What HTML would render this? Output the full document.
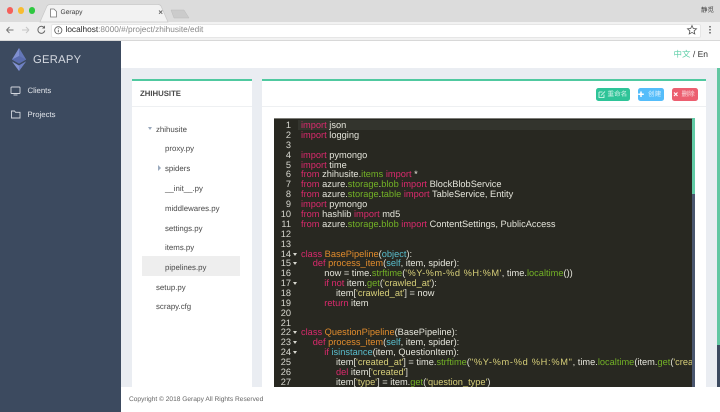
<!DOCTYPE html>
<html lang="zh"><head><meta charset="utf-8"><title>Gerapy</title>
<style>
html,body{margin:0;padding:0;width:720px;height:412px;overflow:hidden;background:#fff;font-family:"Liberation Sans","Noto Sans CJK SC",sans-serif}
*{box-sizing:border-box}
.a{position:absolute}
#root{position:relative;width:720px;height:412px;overflow:hidden;filter:blur(.3px);text-rendering:geometricPrecision}
.t{position:absolute;white-space:pre;line-height:12px}
.f{position:absolute;white-space:pre;font-size:7.85px;color:#4a4a4a;line-height:12px;margin-top:.5px}
.l{position:absolute;left:301px;white-space:pre;font-size:9.25px;line-height:12px;height:12px;color:#e4e4da}
.n{position:absolute;left:274px;width:17px;text-align:right;white-space:pre;font-size:9.25px;line-height:12px;color:#d8d8d0}
.k{color:#d92a6c}.g{color:#72b026}.o{color:#e08b2c}.s{color:#d5cd78}.c{color:#58bccb}.d{color:#d5cd78;letter-spacing:.5px}
.ar{position:absolute;left:293px;width:0;height:0;border-left:2.5px solid transparent;border-right:2.5px solid transparent;border-top:3px solid #d8d8d0}
.btn{position:absolute;top:88px;height:12.5px;border-radius:2.5px}
.bt{position:absolute;top:88.8px;line-height:12.5px;font-size:6.6px;color:rgba(255,255,255,.78);white-space:pre}
.bar{position:absolute;top:79px;height:2px;background:#50c9a0}
</style></head><body><div id="root">
<!-- browser chrome -->
<div class="a" style="left:0;top:0;width:720px;height:22px;background:#dcdcdc"></div>
<div class="a" style="left:0;top:22px;width:720px;height:19px;background:#f2f2f2;border-bottom:1px solid #d8d8d8"></div>
<div class="a" style="left:6.5px;top:7px;width:6.5px;height:6.5px;border-radius:50%;background:#f5605a"></div>
<div class="a" style="left:17.5px;top:7px;width:6.5px;height:6.5px;border-radius:50%;background:#f8bc30"></div>
<div class="a" style="left:28.5px;top:7px;width:6.5px;height:6.5px;border-radius:50%;background:#2ec840"></div>
<svg class="a" style="left:0;top:0" width="200" height="24"><path d="M40 22 L47 6 Q48 4.5 50 4.5 L158 4.5 Q160 4.5 161 6 L168 22Z" fill="#f2f2f2" stroke="#c8c8c8" stroke-width=".7"/><path d="M171 10 L184 10 L189 18 L174 18Z" fill="#cbcbcb" stroke="#bbb" stroke-width=".5"/><path d="M50.5 9 h3.500 l2.500 2.500 v5.500 h-6z" fill="#fff" stroke="#777" stroke-width=".8"/><path d="M159 10.500 l3.300 3.300 M162.300 10.500 l-3.300 3.300" stroke="#666" stroke-width=".9"/></svg>
<div class="t" style="left:60.5px;top:6.500px;font-size:6.7px;color:#3c3c3c">Gerapy</div>
<div class="t" style="left:701px;top:4.500px;font-size:6.500px;color:#444">静觅</div>
<div class="a" style="left:51px;top:23.5px;width:649.5px;height:14px;background:#fff;border:.5px solid #e6e6e6;border-radius:2px"></div>
<svg class="a" style="left:0;top:22px" width="64" height="18"><path d="M6.500 8 h7 M6.500 8 l3-3 M6.500 8 l3 3" stroke="#777" stroke-width="1" fill="none"/><path d="M22 8 h7 M29 8 l-3-3 M29 8 l-3 3" stroke="#c6c6c6" stroke-width="1" fill="none"/><path d="M44 5.500 a3.500 3.500 0 1 0 .8 3" stroke="#666" stroke-width="1" fill="none"/><path d="M45 3.500 v3 h-3z" fill="#666"/><circle cx="58.300" cy="8.300" r="3.600" fill="none" stroke="#555" stroke-width=".8"/><path d="M58.300 7.800 v2.500 M58.300 6.200 v.8" stroke="#555" stroke-width=".8"/></svg>
<div class="t" style="left:65.5px;top:24.300px;font-size:8.28px;color:#8a8a8a"><span style="color:#2c2c2c">localhost</span>:8000/#/project/zhihusite/edit</div>
<svg class="a" style="left:685px;top:23.300px" width="30" height="14"><path d="M7 2.500 l1.300 3 3.200 .3 -2.400 2.100 .7 3.100 -2.800-1.600 -2.800 1.600 .7-3.100 -2.400-2.100 3.200-.3z" fill="none" stroke="#555" stroke-width=".8"/><circle cx="25" cy="3.800" r=".9" fill="#666"/><circle cx="25" cy="6.800" r=".9" fill="#666"/><circle cx="25" cy="9.800" r=".9" fill="#666"/></svg>
<!-- sidebar -->
<div class="a" style="left:0;top:41px;width:121px;height:371px;background:#3c4a5f"></div>
<svg class="a" style="left:11px;top:47px" width="16" height="25"><path d="M8 1 L1 12.500 L8 16.500 L15 12.500Z" fill="#7f8fd0"/><path d="M8 1 L8 16.500 L15 12.500Z" fill="#6477b8"/><path d="M1 12.500 L8 9 L15 12.500 L8 16.500Z" fill="#5a6cae"/><path d="M1 14.500 L8 18.500 L15 14.500 L8 24Z" fill="#8393d4"/><path d="M8 18.500 L15 14.500 L8 24Z" fill="#6e80c2"/></svg>
<div class="t" style="left:33px;top:54px;font-size:11.2px;color:#d5d9e0;letter-spacing:.3px">GERAPY</div>
<svg class="a" style="left:9px;top:84px" width="14" height="40"><rect x="2" y="3" width="9" height="6.500" rx=".8" fill="none" stroke="#d3d7de" stroke-width=".9"/><path d="M4.500 11 h4" stroke="#d3d7de" stroke-width=".9"/><path d="M2.500 27 h3 l1 1.300 h4.500 v5.700 h-8.500z" fill="none" stroke="#d3d7de" stroke-width=".9"/></svg>
<div class="t" style="left:27.5px;top:84.5px;font-size:7.75px;color:#e2e5ea">Clients</div>
<div class="t" style="left:27.5px;top:109.300px;font-size:7.75px;color:#e2e5ea">Projects</div>
<!-- main -->
<div class="a" style="left:121px;top:41px;width:599px;height:27px;background:#fff"></div>
<div class="t" style="left:673.5px;top:48px;font-size:8.5px;color:#333"><span style="color:#5fcfa8">中文</span> / En</div>
<div class="a" style="left:121px;top:68px;width:599px;height:319px;background:#eaedf2"></div>
<div class="a" style="left:717px;top:68px;width:3px;height:277px;background:#62c6a2"></div>
<div class="a" style="left:717px;top:345px;width:3px;height:42px;background:#3c4a5f"></div>
<!-- left panel -->
<div class="a" style="left:132px;top:79px;width:120px;height:308px;background:#fff"></div>
<div class="bar" style="left:132px;width:120px"></div>
<div class="a" style="left:132px;top:106px;width:120px;height:1px;background:#eef0f2"></div>
<div class="t" style="left:140px;top:88px;font-size:7.77px;font-weight:bold;color:#4a4a4a">ZHIHUSITE</div>
<div class="a" style="left:142px;top:256px;width:98px;height:20px;background:#eeeeee"></div>
<div class="a" style="left:147.5px;top:127px;width:0;height:0;border-left:2.5px solid transparent;border-right:2.5px solid transparent;border-top:3.5px solid #9aa9bd"></div>
<div class="a" style="left:157.5px;top:165px;width:0;height:0;border-top:3px solid transparent;border-bottom:3px solid transparent;border-left:3.5px solid #9aa9bd"></div>
<div class="f" style="left:156px;top:123px">zhihusite</div>
<div class="f" style="left:165px;top:142.5px">proxy.py</div>
<div class="f" style="left:165px;top:162px">spiders</div>
<div class="f" style="left:165px;top:182px">__init__.py</div>
<div class="f" style="left:165px;top:202px">middlewares.py</div>
<div class="f" style="left:165px;top:222px">settings.py</div>
<div class="f" style="left:165px;top:241.5px">items.py</div>
<div class="f" style="left:165px;top:261px">pipelines.py</div>
<div class="f" style="left:156px;top:281px">setup.py</div>
<div class="f" style="left:156px;top:300.5px">scrapy.cfg</div>
<!-- right panel -->
<div class="a" style="left:262px;top:79px;width:444px;height:308px;background:#fff"></div>
<div class="bar" style="left:262px;width:444px"></div>
<div class="a" style="left:262px;top:106px;width:444px;height:1px;background:#eef0f2"></div>
<div class="btn" style="left:596px;width:34px;background:#2fc498"></div>
<div class="btn" style="left:637.5px;width:26.5px;background:#55bdfa"></div>
<div class="btn" style="left:671.5px;width:26px;background:#ec5f70"></div>
<svg class="a" style="left:596px;top:88px" width="102" height="13"><path d="M3 4 h3.500 M3 4 v5.500 h5 v-3 M5 7.500 l4-4" stroke="#e8fbf4" stroke-width=".8" fill="none"/><path d="M45 3.500 v5.500 M42.200 6.300 h5.600" stroke="#fff" stroke-width="1.500"/><path d="M78 4.500 l3.500 3.500 M81.500 4.500 l-3.500 3.500" stroke="#fff" stroke-width="1.200"/></svg>
<div class="bt" style="left:607.5px">重命名</div>
<div class="bt" style="left:648px">创建</div>
<div class="bt" style="left:681.5px">删除</div>
<!-- editor -->
<div class="a" style="left:274px;top:117.5px;width:418px;height:269.5px;background:#282821;overflow:hidden"></div>
<div class="a" style="left:274px;top:117.5px;width:418px;height:1.5px;background:#7d7d78"></div>
<div class="a" style="left:298px;top:120px;width:394px;height:10px;background:#33342d"></div>
<div class="a" style="left:692px;top:117.5px;width:2.5px;height:76.5px;background:#62cba6"></div>
<div class="a" style="left:692px;top:194px;width:2.5px;height:193px;background:#4a566e"></div>
<div class="n" style="top:119px">1</div><div class="l" style="top:119px"><span class="k">import</span> json</div>
<div class="n" style="top:129px">2</div><div class="l" style="top:129px"><span class="k">import</span> logging</div>
<div class="n" style="top:138.8px">3</div>
<div class="n" style="top:148.7px">4</div><div class="l" style="top:148.7px"><span class="k">import</span> pymongo</div>
<div class="n" style="top:158.5px">5</div><div class="l" style="top:158.5px"><span class="k">import</span> time</div>
<div class="n" style="top:168.4px">6</div><div class="l" style="top:168.4px"><span class="k">from</span> zhihusite.<span class="g">items</span> <span class="k">import</span> *</div>
<div class="n" style="top:178.3px">7</div><div class="l" style="top:178.3px"><span class="k">from</span> azure.<span class="g">storage</span>.<span class="g">blob</span> <span class="k">import</span> BlockBlobService</div>
<div class="n" style="top:188.2px">8</div><div class="l" style="top:188.2px"><span class="k">from</span> azure.<span class="g">storage</span>.<span class="g">table</span> <span class="k">import</span> TableService, Entity</div>
<div class="n" style="top:198px">9</div><div class="l" style="top:198px"><span class="k">import</span> pymongo</div>
<div class="n" style="top:207.9px">10</div><div class="l" style="top:207.9px"><span class="k">from</span> hashlib <span class="k">import</span> md5</div>
<div class="n" style="top:217.8px">11</div><div class="l" style="top:217.8px"><span class="k">from</span> azure.<span class="g">storage</span>.<span class="g">blob</span> <span class="k">import</span> ContentSettings, PublicAccess</div>
<div class="n" style="top:227.7px">12</div>
<div class="n" style="top:237.6px">13</div>
<div class="n" style="top:247.5px">14</div><i class="ar" style="top:252.5px"></i><div class="l" style="top:247.5px"><span class="k">class</span> <span class="o">BasePipeline</span>(<span class="c">object</span>):</div>
<div class="n" style="top:257.3px">15</div><i class="ar" style="top:262.3px"></i><div class="l" style="top:257.3px;left:312.7px"><span class="k">def</span> <span class="o">process_item</span>(<span class="c">self</span>, item, spider):</div>
<div class="n" style="top:267.2px">16</div><div class="l" style="top:267.2px;left:324.3px">now = time.<span class="g">strftime</span>(<span class="d">'%Y-%m-%d %H:%M'</span>, time.<span class="g">localtime</span>())</div>
<div class="n" style="top:277px">17</div><i class="ar" style="top:282px"></i><div class="l" style="top:277px;left:324.3px"><span class="k">if</span> <span class="k">not</span> item.<span class="g">get</span>(<span class="s">'crawled_at'</span>):</div>
<div class="n" style="top:286.9px">18</div><div class="l" style="top:286.9px;left:336px">item[<span class="s">'crawled_at'</span>] = now</div>
<div class="n" style="top:296.8px">19</div><div class="l" style="top:296.8px;left:324.3px"><span class="k">return</span> item</div>
<div class="n" style="top:306.7px">20</div>
<div class="n" style="top:316.5px">21</div>
<div class="n" style="top:326.4px">22</div><i class="ar" style="top:331.4px"></i><div class="l" style="top:326.4px"><span class="k">class</span> <span class="o">QuestionPipeline</span>(BasePipeline):</div>
<div class="n" style="top:336.3px">23</div><i class="ar" style="top:341.3px"></i><div class="l" style="top:336.3px;left:312.7px"><span class="k">def</span> <span class="o">process_item</span>(<span class="c">self</span>, item, spider):</div>
<div class="n" style="top:346.2px">24</div><i class="ar" style="top:351.2px"></i><div class="l" style="top:346.2px;left:324.3px"><span class="k">if</span> <span class="c">isinstance</span>(item, QuestionItem):</div>
<div class="n" style="top:356px">25</div><div class="l" style="top:356px;left:336px;width:355.5px;overflow:hidden">item[<span class="s">'created_at'</span>] = time.<span class="g">strftime</span>(<span class="d" style="letter-spacing:.7px">"%Y-%m-%d %H:%M"</span>, time.<span class="g">localtime</span>(item.<span class="g">get</span>(<span class="s">'created</span></div>
<div class="n" style="top:365.9px">26</div><div class="l" style="top:365.9px;left:336px"><span class="k">del</span> item[<span class="s">'created'</span>]</div>
<div class="n" style="top:375.8px">27</div><div class="l" style="top:375.8px;left:336px">item[<span class="s">'type'</span>] = item.<span class="g">get</span>(<span class="s">'question_type'</span>)</div>
<!-- footer -->
<div class="a" style="left:121px;top:387px;width:599px;height:25px;background:#fff"></div>
<div class="t" style="left:129px;top:393.5px;font-size:6.6px;color:#666">Copyright © 2018 Gerapy All Rights Reserved</div>
</div></body></html>
